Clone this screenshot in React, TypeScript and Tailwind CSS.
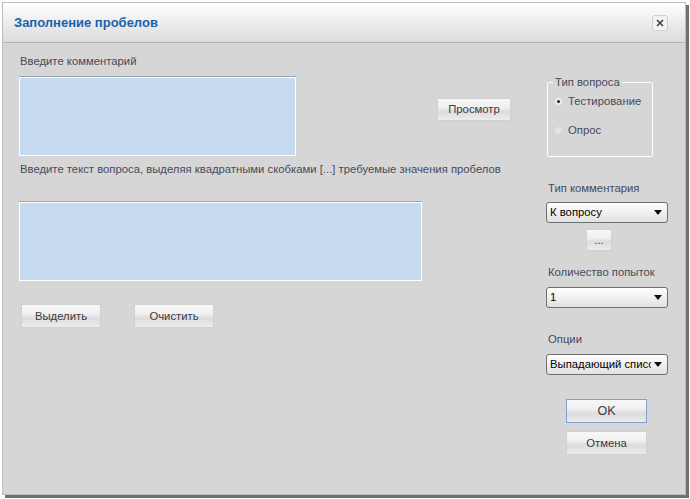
import React from "react";

const font = { fontFamily: '"Liberation Sans", Arial, sans-serif' };

function Btn({
  label,
  className = "",
  edge = "border-[#d0d0d0]",
}: {
  label: string;
  className?: string;
  edge?: string;
}) {
  return (
    <div
      className={`flex items-center justify-center border ${edge} bg-[linear-gradient(#f7f7f7,#f0f0f0_40%,#dcdcdc_60%,#ececec)] text-[11.3px] text-[#3a3a48] ${className}`}
    >
      {label}
    </div>
  );
}

function Select({ value }: { value: string }) {
  return (
    <div className="flex h-[21px] w-[122px] items-center overflow-hidden rounded-[3px] border border-[#6f6f6f] bg-[linear-gradient(#ffffff,#f0f0f0_50%,#e2e2e2)] pl-[3px] pr-[5px]">
      <span className="flex-1 overflow-hidden whitespace-nowrap text-[11.3px] text-black">{value}</span>
      <svg width="8" height="5" viewBox="0 0 8 5" className="ml-[3px] shrink-0">
        <path d="M0 0h8L4 5z" fill="#111" />
      </svg>
    </div>
  );
}

function TextBox({ w }: { w: string }) {
  return (
    <div className={`h-[80px] ${w} border-t border-[#9aa4ad]`}>
      <div className="h-full w-full border border-white bg-[#c6dbf0]" />
    </div>
  );
}

function Label({ children, className = "" }: { children: React.ReactNode; className?: string }) {
  return <div className={`h-[14px] text-[11.3px] leading-[14px] text-[#474a5c] ${className}`}>{children}</div>;
}

export default function App() {
  return (
    <div className="h-[499px] w-[690px] bg-white pl-[2px] pt-[2px]" style={font}>
      <div className="flex h-[493px] w-[684px] flex-col border border-[#bdbdbd] bg-[#d6d6d6] shadow-[3px_3px_0_#707070]">
        {/* title bar */}
        <div className="flex h-[40px] items-center justify-between border-b border-[#b5b5b5] bg-[linear-gradient(#ffffff,#e9e9e9_60%,#dcdcdc)] pl-[11px] pr-[17px]">
          <span className="text-[13px] font-bold text-[#1b62ab]">Заполнение пробелов</span>
          <div className="flex h-[16px] w-[16px] items-center justify-center rounded-[3px] border border-[#d0d0d0] bg-[#f2f2f2]">
            <svg width="8" height="8" viewBox="0 0 8 8">
              <path d="M1 1l6 6M7 1L1 7" stroke="#3a3f4a" strokeWidth="1.6" />
            </svg>
          </div>
        </div>

        <div className="flex">
          {/* left column */}
          <div className="flex w-[543px] flex-col pl-[16px]">
            <Label className="mt-[11px] pl-[1px]">Введите комментарий</Label>
            <div className="mt-[8px] flex">
              <TextBox w="w-[277px]" />
              <Btn label="Просмотр" className="ml-[141px] mt-[22px] h-[23px] w-[74px]" />
            </div>
            <Label className="mt-[6px] pl-[1px]">
              Введите текст вопроса, выделяя квадратными скобками [...] требуемые значения пробелов
            </Label>
            <div className="mt-[25px]">
              <TextBox w="w-[403px]" />
            </div>
            <div className="mt-[23px] flex pl-[2px]">
              <Btn label="Выделить" className="h-[24px] w-[80px]" />
              <Btn label="Очистить" className="ml-[33px] h-[24px] w-[80px]" />
            </div>
          </div>

          {/* right column */}
          <div className="flex w-[122px] flex-col">
            <div className="relative ml-[1px] mt-[39px] h-[75px] w-[106px] rounded-[2px] border border-white">
              <span className="absolute left-[5px] top-[-8px] bg-[#d6d6d6] px-[2px] text-[11.3px] leading-[14px] text-[#474a5c]">
                Тип вопроса
              </span>
              <div className="mt-[10px] flex items-center pl-[7px]">
                <span className="flex h-[7px] w-[7px] items-center justify-center rounded-full bg-[#ececec]">
                  <span className="h-[3px] w-[3px] rounded-full bg-[#222]" />
                </span>
                <span className="ml-[6px] text-[11.3px] text-[#474a5c]">Тестирование</span>
              </div>
              <div className="mt-[12px] flex items-center pl-[7px]">
                <span className="h-[7px] w-[7px] rounded-full bg-[#e2e2e2]" />
                <span className="ml-[6px] text-[11.3px] text-[#474a5c]">Опрос</span>
              </div>
            </div>

            <Label className="mt-[24px] pl-[2px]">Тип комментария</Label>
            <div className="mt-[7px]">
              <Select value="К вопросу" />
            </div>
            <Btn label="..." className="ml-[40px] mt-[6px] h-[22px] w-[26px] text-[10px]" />
            <Label className="mt-[14px] pl-[2px]">Количество попыток</Label>
            <div className="mt-[8px]">
              <Select value="1" />
            </div>
            <Label className="mt-[24px] pl-[2px]">Опции</Label>
            <div className="mt-[8px]">
              <Select value="Выпадающий список" />
            </div>
            <Btn label="OK" edge="border-[#7da2ce]" className="ml-[20px] mt-[24px] h-[24px] w-[81px] text-[12.5px]" />
            <Btn label="Отмена" className="ml-[20px] mt-[8px] h-[24px] w-[81px]" />
          </div>
        </div>
      </div>
    </div>
  );
}
